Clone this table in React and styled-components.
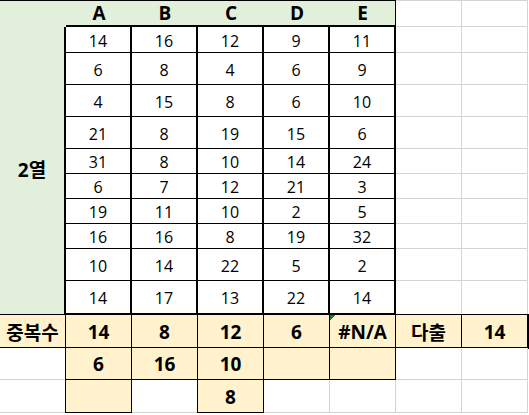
import React from 'react'
import styled, { createGlobalStyle, css } from 'styled-components'

const GlobalStyle = createGlobalStyle`
  html, body {
    margin: 0;
    padding: 0;
    background: #fff;
  }
  body {
    font-family: "Open Sans", "Noto Sans CJK KR", sans-serif;
    color: #000;
  }
`

const GRID = '#d4d4d4'
const GREEN = '#e2efda'
const YELLOW = '#fff2cc'

const ROW_HEIGHTS = [27, 26, 32, 32, 32, 25, 25, 25, 25, 32, 34, 33, 32, 33]

const Sheet = styled.div`
  display: grid;
  grid-template-columns: repeat(8, 66px);
  grid-template-rows: ${ROW_HEIGHTS.map(h => h + 'px').join(' ')};
  width: 528px;
`

const base = css`
  box-sizing: border-box;
  display: flex;
  align-items: center;
  justify-content: center;
  min-width: 0;
  min-height: 0;
  white-space: nowrap;
`

const Blank = styled.div`
  ${base}
  background: #fff;
  border-right: 1px solid ${GRID};
  border-bottom: 1px solid ${GRID};
  ${({ $top }) => $top && css`border-top: 1px solid ${GRID};`}
`

const Corner = styled.div`
  ${base}
  background: ${GREEN};
  border-top: 1px solid #000;
`

const Head = styled.div`
  ${base}
  background: ${GREEN};
  border-top: 1px solid #000;
  border-bottom: 2px solid #000;
  ${({ $edge }) => $edge && css`border-right: 1px solid #000;`}
  font-size: 19px;
  font-weight: 700;
  padding-bottom: 1px;
`

const Label = styled.div`
  ${base}
  grid-row: span 10;
  background: ${GREEN};
  border-right: 2px solid #000;
  border-bottom: 1px solid #000;
  font-size: 19px;
  font-weight: 700;
  padding-bottom: 4px;
`

const Data = styled.div`
  ${base}
  background: #fff;
  border-right: 2px solid #000;
  border-bottom: ${({ $last }) => ($last ? 2 : 1)}px solid #000;
  font-size: 16px;
  padding-top: 2px;
`

const Sum = styled.div`
  ${base}
  background: ${YELLOW};
  border-right: 1px solid #000;
  border-bottom: 1px solid #000;
  box-shadow: 0 0 0 1px #000;
  font-size: 19px;
  font-weight: 700;
  padding-top: 1px;
  ${({ $error }) =>
    $error &&
    css`
      background: linear-gradient(135deg, #1f7a35 0 4px, transparent 4px) 0 0 / 7px 7px no-repeat, ${YELLOW};
    `}
`

const columns = ['A', 'B', 'C', 'D', 'E']

const values = [
  [14, 16, 12, 9, 11],
  [6, 8, 4, 6, 9],
  [4, 15, 8, 6, 10],
  [21, 8, 19, 15, 6],
  [31, 8, 10, 14, 24],
  [6, 7, 12, 21, 3],
  [19, 11, 10, 2, 5],
  [16, 16, 8, 19, 32],
  [10, 14, 22, 5, 2],
  [14, 17, 13, 22, 14],
]

export default function App() {
  return (
    <>
      <GlobalStyle />
      <Sheet>
        <Corner />
        {columns.map((c, i) => (
          <Head key={c} $edge={i === columns.length - 1}>{c}</Head>
        ))}
        <Blank $top />
        <Blank $top />

        {values.map((row, r) => (
          <React.Fragment key={r}>
            {r === 0 && <Label>2열</Label>}
            {row.map((v, i) => (
              <Data key={i} $last={r === values.length - 1}>{v}</Data>
            ))}
            <Blank />
            <Blank />
          </React.Fragment>
        ))}

        <Sum>중복수</Sum>
        <Sum>14</Sum>
        <Sum>8</Sum>
        <Sum>12</Sum>
        <Sum>6</Sum>
        <Sum $error>#N/A</Sum>
        <Sum>다출</Sum>
        <Sum>14</Sum>

        <Blank />
        <Sum>6</Sum>
        <Sum>16</Sum>
        <Sum>10</Sum>
        <Sum />
        <Sum />
        <Blank />
        <Blank />

        <Blank />
        <Sum />
        <Blank />
        <Sum>8</Sum>
        <Blank />
        <Blank />
        <Blank />
        <Blank />
      </Sheet>
    </>
  )
}
